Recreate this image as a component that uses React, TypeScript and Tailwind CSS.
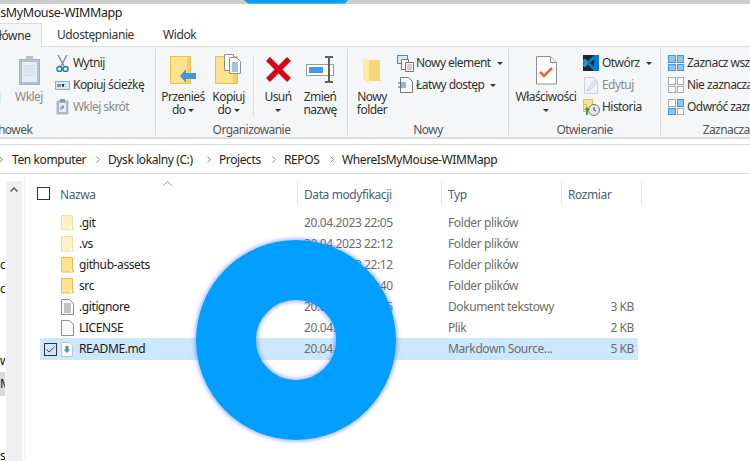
import type { ReactNode } from "react";

const font = "font-['Noto_Sans','Open_Sans',sans-serif]";

function Folder({ dim }: { dim?: boolean }) {
  return (
    <svg width="13" height="16" viewBox="0 0 13 16" className={dim ? "opacity-50" : ""}>
      <path d="M.5.500h11v13h1v1.500h-12z" fill="#ffe28e" stroke="#e8bf4e" />
      <rect x="9" y="12" width="2" height="3" fill="#fff3c4" />
    </svg>
  );
}

function TextDoc({ lines }: { lines?: boolean }) {
  return (
    <svg width="13" height="16" viewBox="0 0 13 16">
      <path d="M.5.500h8l4 4v11h-12z" fill="#fafafa" stroke="#8c8c8c" />
      {lines && <path d="M3 5h7M3 7h7M3 9h7M3 11h7M3 13h7" stroke="#8c8c8c" />}
    </svg>
  );
}

function MdDoc() {
  return (
    <svg width="12" height="15" viewBox="0 0 12 15">
      <path d="M.5.500h8l3 3v11h-11z" fill="#f6f8fa" stroke="#c3c6c9" />
      <path d="M4.500 4h3v3.500H9L6 11 3 7.500h1.500z" fill="#4d8db5" />
    </svg>
  );
}

function Check({ on }: { on?: boolean }) {
  return (
    <svg width="13" height="13" viewBox="0 0 13 13">
      <rect x=".5" y=".5" width="12" height="12" fill={on ? "#cce8ff" : "#fff"} stroke="#333" />
      {on && <path d="M2.500 6.500 5 9l5.500-5" fill="none" stroke="#444" />}
    </svg>
  );
}

function Caret() {
  return <span className="inline-block border-x-[3.5px] border-t-[3.5px] border-x-transparent border-t-[#333] align-middle" />;
}

function Clipboard() {
  return (
    <svg width="21" height="29" viewBox="0 0 21 29">
      <rect x=".5" y="3.500" width="20" height="25" fill="#b3c0d2" stroke="#a7b2c1" />
      <rect x="3" y="6" width="15" height="20" fill="#e5ecf6" />
      <path d="M5 10h11M5 13h11M5 16h11M5 19h11" stroke="#cdd6e4" />
      <rect x="7" y="0" width="7" height="6" fill="#b8bfc9" />
    </svg>
  );
}

function MoveIcon() {
  return (
    <svg width="26" height="28" viewBox="0 0 26 28">
      <path d="M.5.500h20v27H.5z" fill="#ffe28e" stroke="#e8bf4e" />
      <path d="M17 1h3v26h-3z" fill="#f2cf6c" />
      <path d="M10 20l6-7v4h10v6H16v4z" fill="#3f97dd" />
    </svg>
  );
}

function CopyIcon() {
  return (
    <svg width="27" height="30" viewBox="0 0 27 30" className="-mt-[2px]">
      <path d="M.5 2.500h22v27H.5z" fill="#ffe28e" stroke="#e8bf4e" />
      <path d="M18 3h4v26h-4z" fill="#f2cf6c" />
      <path d="M9.500.500h9v16h-9z" fill="#fff" stroke="#8f8f8f" />
      <path d="M14.500 3.500h7l4 4v12h-11z" fill="#fff" stroke="#8f8f8f" />
      <path d="M17 9h6M17 11h6M17 13h6M17 15h6M17 17h6" stroke="#4a86c8" />
    </svg>
  );
}

function DeleteIcon() {
  return (
    <svg width="27" height="27" viewBox="0 0 27 27">
      <path d="M3 3l21 21M24 3 3 24" stroke="#d8031b" strokeWidth="5.500" />
    </svg>
  );
}

function RenameIcon() {
  return (
    <svg width="29" height="27" viewBox="0 0 29 27">
      <rect x=".5" y="8.500" width="27" height="11" fill="#fff" stroke="#9a9a9a" />
      <rect x="3" y="11" width="14" height="6" fill="#3d9be9" />
      <path d="M19 1h3l1 1 1-1h3M23 2v23M19 26h3l1-1 1 1h3" fill="none" stroke="#5f5f5f" strokeWidth="2" />
    </svg>
  );
}

function NewFolderIcon() {
  return (
    <svg width="19" height="26" viewBox="0 0 19 26" className="mt-[2px]">
      <path d="M0 0l6 2h11v20l2 1H6v3l-6-5z" fill="#ffe9a6" />
      <path d="M6 2h11v20l2 1H6z" fill="#f7d675" />
    </svg>
  );
}

function NewItemIcon() {
  return (
    <svg width="17" height="17" viewBox="0 0 17 17">
      <rect x=".5" y=".5" width="10" height="8" fill="#dbe8f4" stroke="#4c86ad" />
      <path d="M4.500 4.500h7v10h-7z" fill="#fff" stroke="#777" />
      <path d="M8.500 7.500h8v9h-8z" fill="#fff" stroke="#777" />
      <path d="M10 10h5M10 12h5M10 14h5" stroke="#d08a9b" />
    </svg>
  );
}

function EasyAccessIcon() {
  return (
    <svg width="15" height="16" viewBox="0 0 15 16">
      <path d="M2.500.500h8l4 4v11h-12z" fill="#fff" stroke="#777" />
      <path d="M0 6h8M2 8h6M0 10h8" stroke="#2a6fb0" />
    </svg>
  );
}

function PropertiesIcon() {
  return (
    <svg width="21" height="29" viewBox="0 0 21 29">
      <path d="M.5.500h14l6 6v21.500H.5z" fill="#fff" stroke="#8f8f8f" />
      <path d="M14.500.500v6h6" fill="#eee" stroke="#8f8f8f" />
      <path d="M4 16l4 4 8-8" fill="none" stroke="#f0662a" strokeWidth="2.500" />
    </svg>
  );
}

function CodeIcon() {
  return (
    <svg width="16" height="16" viewBox="0 0 16 16">
      <rect width="16" height="16" fill="#252526" />
      <path d="M11 0h5v16h-5L5 10l-3 2.500L0 11V5l2-1.500L5 6z" fill="#0a78c4" />
      <path d="M11 4.500 6.800 8 11 11.500z" fill="#252526" />
      <path d="M0 5.500 2 4l2.800 4L2 12l-2-1.500L1.800 8z" fill="#1a9ae6" />
    </svg>
  );
}

function EditIcon() {
  return (
    <svg width="15" height="17" viewBox="0 0 15 17" className="opacity-60">
      <path d="M.5.500h9l4 4v12H.5z" fill="#eef2fa" stroke="#a9b8d3" />
      <path d="M3 14l1-3 7-8 2 2-7 8z" fill="#d9e2f2" stroke="#a9b8d3" />
    </svg>
  );
}

function HistoryIcon() {
  return (
    <svg width="17" height="17" viewBox="0 0 17 17">
      <path d="M.5.500h9v9h-9z" fill="#ffe28e" stroke="#e8bf4e" />
      <path d="M.5 5.500h3v7h-3z" fill="#ffe28e" stroke="#e8bf4e" />
      <circle cx="11" cy="11" r="5.500" fill="#e8e8e8" stroke="#777" />
      <path d="M11 8v3l2 1" fill="none" stroke="#444" />
      <path d="M1 11l3-3 3 3H5v5H3v-5z" fill="#3fa53a" />
    </svg>
  );
}

function SelectGrid({ cells }: { cells: boolean[] }) {
  const on = (i: number) => (cells[i] ? "bg-[#8dc4f0] border-[#3d98e0]" : "bg-white border-[#a8a8a8]");
  return (
    <div className="grid h-[16px] w-[16px] grid-cols-2 gap-px">
      {[0, 1, 2, 3].map((i) => (
        <span key={i} className={`border ${on(i)}`} />
      ))}
    </div>
  );
}

function LargeBtn({ icon, label, second, width, muted }: { icon: ReactNode; label: string; second?: ReactNode; width: string; muted?: boolean }) {
  return (
    <div className={`flex shrink-0 flex-col items-center text-center leading-[13px] ${width} ${muted ? "text-[#8a8a8a]" : "text-[#333]"}`}>
      <div className="flex h-[34px] items-start justify-center">{icon}</div>
      <div className="whitespace-nowrap">{label}</div>
      <div className="whitespace-nowrap">{second}</div>
    </div>
  );
}

function SmallBtn({ icon, label, muted, caret }: { icon: ReactNode; label: string; muted?: boolean; caret?: boolean }) {
  return (
    <div className={`flex h-[22px] items-center whitespace-nowrap ${muted ? "text-[#8a8a8a]" : "text-[#333]"}`}>
      <div className="flex w-[20px] shrink-0 items-center justify-center">{icon}</div>
      <span className="ml-[1px]">{label}</span>
      {caret && <span className="ml-[6px] flex"><Caret /></span>}
    </div>
  );
}

function Group({ label, width, children }: { label: string; width: string; children: ReactNode }) {
  return (
    <div className={`flex h-[86px] shrink-0 flex-col border-r border-[#dcdddf] ${width}`}>
      <div className="flex h-[74px] shrink-0 pt-[3px]">{children}</div>
      <div className="text-center leading-[14px] text-[#555]">{label}</div>
    </div>
  );
}

const rows = [
  { name: ".git", date: "20.04.2023 22:05", type: "Folder plików", size: "", icon: <Folder dim /> },
  { name: ".vs", date: "20.04.2023 22:12", type: "Folder plików", size: "", icon: <Folder dim /> },
  { name: "github-assets", date: "20.04.2023 22:12", type: "Folder plików", size: "", icon: <Folder /> },
  { name: "src", date: "20.04.2023 22:40", type: "Folder plików", size: "", icon: <Folder /> },
  { name: ".gitignore", date: "20.04.2023 22:05", type: "Dokument tekstowy", size: "3 KB", icon: <TextDoc lines /> },
  { name: "LICENSE", date: "20.04.2023 22:05", type: "Plik", size: "2 KB", icon: <TextDoc /> },
  { name: "README.md", date: "20.04.2023 22:05", type: "Markdown Source...", size: "5 KB", icon: <MdDoc />, selected: true },
];

const crumbs = [
  { label: "Ten komputer", w: "w-[96px]" },
  { label: "Dysk lokalny (C:)", w: "w-[111px]" },
  { label: "Projects", w: "w-[65px]" },
  { label: "REPOS", w: "w-[58px]" },
  { label: "WhereIsMyMouse-WIMMapp", w: "w-[200px]" },
];

function Chevron() {
  return (
    <svg width="4" height="7" viewBox="0 0 4 7" className="shrink-0">
      <path d="M.5.500 3.500 3.500.5 6.500" fill="none" stroke="#8a8a8a" />
    </svg>
  );
}

export default function App() {
  return (
    <div className={`relative h-[461px] w-[750px] overflow-hidden bg-white text-[12px] tracking-[-0.4px] text-black ${font}`}>
      {/* title strip */}
      <div className="h-[4px] bg-[#cccccc]" />
      <div className="-ml-[40px] h-[19px] whitespace-nowrap pt-[1px] text-[12.500px] leading-[16px] text-[#222]">WhereIsMyMouse-WIMMapp</div>

      {/* tabs */}
      <div className="flex h-[23px] items-stretch text-[#333]">
        <div className="relative z-10 -ml-[20px] flex h-[24px] w-[62px] items-center justify-center border-r border-t border-[#dadbdc] bg-[#f5f6f7]">Główne</div>
        <div className="ml-[15px] flex items-center">Udostępnianie</div>
        <div className="ml-[29px] flex items-center">Widok</div>
      </div>

      {/* ribbon */}
      <div className="flex h-[93px] overflow-hidden border-y border-b-2 border-[#dadbdc] bg-[#f5f6f7] pt-[2px] tracking-[-0.55px]">
        <Group label="Schowek" width="w-[156px] [&>div:last-child]:-ml-[136px]">
          <div className="flex -ml-[43px] pt-[4px]">
            <LargeBtn width="w-[46px]" label="Przypnij" icon={<span />} />
            <LargeBtn width="w-[34px] ml-[9px]" muted label="Wklej" icon={<Clipboard />} />
          </div>
          <div className="ml-[6px]">
            <SmallBtn icon={<svg width="13" height="17" viewBox="0 0 13 17"><path d="M2 0l6 11M11 0 5 11" stroke="#7f8a96" strokeWidth="1.300" /><circle cx="3.500" cy="14" r="2.500" fill="none" stroke="#1f78c8" strokeWidth="1.500" /><circle cx="9.500" cy="14" r="2.500" fill="none" stroke="#1f78c8" strokeWidth="1.500" /></svg>} label="Wytnij" />
            <SmallBtn icon={<svg width="15" height="9" viewBox="0 0 15 9"><rect x=".5" y=".5" width="14" height="8" fill="#d6e8f8" stroke="#82b4dc" /><path d="M3 3v3M5 3v3M7 3l1 3 1-3" stroke="#345" /></svg>} label="Kopiuj ścieżkę" />
            <SmallBtn muted icon={<svg width="13" height="16" viewBox="0 0 13 16"><rect x=".5" y="1.500" width="12" height="14" fill="#aeb9c7" /><rect x="4" y="0" width="5" height="3" fill="#8d97a4" /><rect x="3" y="4" width="7" height="9" fill="#e7ecf3" /><path d="M5 11V8h3M6 6l2 2-2 2" stroke="#7d8897" fill="none" /></svg>} label="Wklej skrót" />
          </div>
        </Group>

        <Group label="Organizowanie" width="w-[192px]">
          <div className="flex items-start pt-[4px]">
            <LargeBtn width="w-[48px] ml-[3px]" label="Przenieś" second={<>do <Caret /></>} icon={<MoveIcon />} />
            <LargeBtn width="w-[41px] ml-[1px]" label="Kopiuj" second={<>do <Caret /></>} icon={<CopyIcon />} />
            <LargeBtn width="w-[49px] ml-[4px] border-l border-[#dcdddf]" label="Usuń" second={<Caret />} icon={<DeleteIcon />} />
            <LargeBtn width="w-[36px] ml-[0px]" label="Zmień" second="nazwę" icon={<RenameIcon />} />
          </div>
        </Group>

        <Group label="Nowy" width="w-[161px]">
          <div className="flex pt-[4px]">
            <LargeBtn width="w-[44px] ml-[2px]" label="Nowy" second="folder" icon={<NewFolderIcon />} />
          </div>
          <div className="ml-[1px]">
            <SmallBtn caret icon={<NewItemIcon />} label="Nowy element" />
            <SmallBtn caret icon={<EasyAccessIcon />} label="Łatwy dostęp" />
          </div>
        </Group>

        <Group label="Otwieranie" width="w-[152px]">
          <div className="flex pt-[4px]">
            <LargeBtn width="w-[72px] ml-[1px]" label="Właściwości" second={<Caret />} icon={<PropertiesIcon />} />
          </div>
          <div className="-ml-[1px]">
            <SmallBtn caret icon={<CodeIcon />} label="Otwórz" />
            <SmallBtn muted icon={<EditIcon />} label="Edytuj" />
            <SmallBtn icon={<HistoryIcon />} label="Historia" />
          </div>
        </Group>

        <Group label="Zaznaczanie" width="w-[146px] border-r-0">
          <div className="ml-[5px]">
            <SmallBtn icon={<SelectGrid cells={[true, true, true, true]} />} label="Zaznacz wszystko" />
            <SmallBtn icon={<SelectGrid cells={[false, false, false, false]} />} label="Nie zaznaczaj nic" />
            <SmallBtn icon={<SelectGrid cells={[false, true, true, false]} />} label="Odwróć zaznaczenie" />
          </div>
        </Group>
      </div>

      {/* address bar */}
      <div className="mt-[5px] flex h-[30px] items-center overflow-hidden whitespace-nowrap border-y border-[#dadbdc] pt-[1px] text-[#222]">
        <div className="-ml-[1px] mr-[9px]"><Chevron /></div>
        {crumbs.map((c, i) => (
          <div key={c.label} className={`flex shrink-0 items-center justify-between ${c.w}`}>
            <span>{c.label}</span>
            {i < crumbs.length - 1 && <span className="mr-[8px]"><Chevron /></span>}
          </div>
        ))}
      </div>

      {/* body */}
      <div className="flex h-[287px]">
        <div className="flex w-[25px] shrink-0 border-r border-[#f3f3f3] pt-[7px]">
          <div className="w-[5px] shrink-0 overflow-hidden whitespace-nowrap text-[#111]">
            <div className="mt-[78px] leading-[12px]">ct</div>
            <div className="mt-[12px] leading-[12px]">ct</div>
            <div className="mt-[60px] leading-[12px]">w</div>
            <div className="mt-[5px] h-[24px] bg-[#d9d9d9] leading-[24px]">M</div>
            <div className="mt-[54px] leading-[12px]">ss</div>
          </div>
          <div className="ml-[1px] flex w-[16px] shrink-0 justify-center bg-[#f0f0f0] pt-[6px]">
            <svg width="8" height="5" viewBox="0 0 8 5"><path d="M.5 4.500 4 1l3.500 3.500" fill="none" stroke="#606060" strokeWidth="1.500" /></svg>
          </div>
        </div>

        <div className="min-w-0 flex-1 pt-[7px]">
          <div className="flex h-[24px] items-center">
            <div className="ml-[12px] flex w-[23px]"><Check /></div>
            <div className="flex h-full w-[237px] items-center pt-[3px] text-[#4c607a]">Nazwa</div>
            <div className="flex h-full w-[144px] items-center border-l border-[#e5e5e5] pl-[6px] pt-[3px] text-[#4c607a]">Data modyfikacji</div>
            <div className="flex h-full w-[120px] items-center border-l border-[#e5e5e5] pl-[6px] pt-[3px] text-[#4c607a]">Typ</div>
            <div className="flex h-full w-[81px] items-center border-x border-[#e5e5e5] pl-[6px] pt-[3px] text-[#4c607a]">Rozmiar</div>
          </div>
          <div className="mt-[7px]">
            {rows.map((r) => (
              <div
                key={r.name}
                className={`ml-[15px] flex w-[598px] items-center whitespace-nowrap border border-transparent ${
                  r.selected ? "h-[22px] border-[#99d1ff] bg-[#cce8ff]" : "h-[21px]"
                }`}
              >
                <div className="ml-[3px] flex w-[17px] shrink-0">{r.selected && <Check on />}</div>
                <div className="flex w-[18px] shrink-0">{r.icon}</div>
                <div className="w-[225px] shrink-0 text-[#1a1a1a]">{r.name}</div>
                <div className="w-[144px] shrink-0 text-[#6d6d6d]">{r.date}</div>
                <div className="w-[120px] shrink-0 text-[#6d6d6d]">{r.type}</div>
                <div className="w-[66px] shrink-0 text-right text-[#6d6d6d]">{r.size}</div>
              </div>
            ))}
          </div>
        </div>
      </div>

      {/* sort caret sits over the header */}
      <svg width="9" height="5" viewBox="0 0 9 5" className="absolute left-[163px] top-[181px]">
        <path d="M.5 4.500 4.500.5l4 4" fill="none" stroke="#9a9a9a" />
      </svg>

      {/* highlight ring drawn over the window */}
      <svg width="125" height="5" viewBox="0 0 125 5" className="absolute left-[235px] top-0">
        <path d="M9 0L13 3.500H110L113 0z" fill="#009fff" />
      </svg>
      <div className="absolute left-[196px] top-[240px] h-[200px] w-[200px] rounded-full border-[60px] border-[#009fff] shadow-[0_0_4px_1px_rgba(70,90,255,0.55),inset_0_0_4px_1px_rgba(70,90,255,0.55)] blur-[0.5px]" />
    </div>
  );
}
